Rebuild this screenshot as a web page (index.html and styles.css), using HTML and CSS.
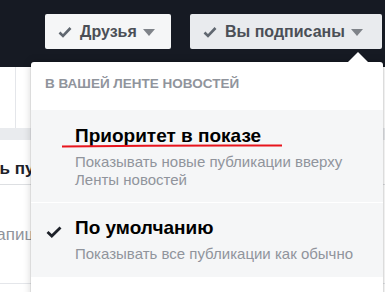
FILE: index.html
```html
<!DOCTYPE html>
<html>
<head>
<meta charset="utf-8">
<link rel="stylesheet" href="styles.css">
</head>
<body>
<div class="topbar">
  <button class="btn btn-friends">
    <svg class="chk" viewBox="0 0 14 12" width="14" height="12"><path d="M1.5 6.5 L5 10 L12.5 2" fill="none" stroke="#606770" stroke-width="2.6"/></svg>
    <span>Друзья</span>
    <span class="tri"></span>
  </button>
  <button class="btn btn-follow">
    <svg class="chk" viewBox="0 0 14 12" width="14" height="12"><path d="M1.5 6.5 L5 10 L12.5 2" fill="none" stroke="#606770" stroke-width="2.6"/></svg>
    <span>Вы подписаны</span>
    <span class="tri"></span>
  </button>
</div>
<div class="page">
  <div class="col-top"></div>
  <div class="strip"></div>
  <div class="tabs"><span class="tab-label">Создать публикацию</span></div>
  <div class="composer"><span class="composer-text">Напишите что-нибудь...</span></div>
</div>

<div class="menu">
  <div class="menu-head">В ВАШЕЙ ЛЕНТЕ НОВОСТЕЙ</div>
  <div class="item item-priority">
    <div class="title">Приоритет в показе
      <svg class="mark" viewBox="0 0 222 4" width="222" height="4"><path d="M1 2.6 Q110 1.2 221 1.6" fill="none" stroke="#e8141c" stroke-width="2"/></svg>
    </div>
    <div class="desc">Показывать новые публикации вверху Ленты новостей</div>
  </div>
  <div class="item item-default">
    <svg class="tick" viewBox="0 0 16 12" width="16" height="12"><path d="M1.5 6 L5.8 10 L14.5 1.5" fill="none" stroke="#1d2129" stroke-width="2.8"/></svg>
    <div class="title">По умолчанию</div>
    <div class="desc">Показывать все публикации как обычно</div>
  </div>
</div>
</body>
</html>
```
FILE: styles.css
```css
html, body {
  margin: 0;
  padding: 0;
  width: 385px;
  height: 292px;
  overflow: hidden;
  background: #fff;
  font-family: "Liberation Sans", Arial, sans-serif;
  position: relative;
}

.topbar {
  height: 67px;
  background: #161a23;
  display: flex;
  align-items: flex-start;
  padding: 14px 0 0 45px;
  box-sizing: border-box;
  gap: 19px;
}

.btn {
  height: 35px;
  border: none;
  border-radius: 2px;
  display: flex;
  align-items: center;
  font-family: inherit;
  font-weight: bold;
  font-size: 16px;
  color: #4b4f56;
  padding: 0 0 0 13px;
  box-sizing: border-box;
}
.btn-friends {
  width: 126px;
  background: #f5f6f7;
}
.btn-follow {
  width: 192px;
  background: #e9ebee;
}
.chk { margin-right: 8px; }
.tri {
  width: 0;
  height: 0;
  border-left: 6.5px solid transparent;
  border-right: 6.5px solid transparent;
  border-top: 7px solid #7f8389;
  margin-left: 6px;
  margin-top: 2px;
}

.page {
  position: relative;
}
.col-top {
  height: 61px;
  margin-left: 15px;
  border-left: 1px solid #e4e6ea;
}
.strip {
  height: 12px;
  background: #e9ebee;
}
.tabs {
  height: 45px;
  border-bottom: 1px solid #dddfe2;
  position: relative;
  box-sizing: border-box;
  padding-top: 19px;
  overflow: hidden;
  white-space: nowrap;
}
.tab-label {
  display: inline-block;
  font-weight: bold;
  font-size: 17px;
  color: #1d2129;
  margin-left: -60px;
}
.tabs::after {
  content: "";
  position: absolute;
  left: 14px;
  bottom: -1px;
  width: 12px;
  height: 6px;
  background: #fff;
  clip-path: polygon(0 100%, 50% 0, 100% 100%);
}
.composer {
  height: 99px;
  border-bottom: 1px solid #e4e6ea;
  padding-top: 40px;
  box-sizing: border-box;
  white-space: nowrap;
  overflow: hidden;
}
.composer-text {
  display: inline-block;
  font-size: 17px;
  color: #90949c;
  margin-left: -16px;
}

.menu {
  position: absolute;
  left: 31px;
  top: 62px;
  width: 352px;
  height: 240px;
  background: #fff;
  border-radius: 3px;
  box-shadow: 0 0 8px rgba(0,0,0,0.18), 0 0 0 1px rgba(0,0,0,0.06);
}
.menu::before {
  content: "";
  position: absolute;
  top: -10px;
  left: 317px;
  width: 20px;
  height: 10px;
  background: #fff;
  clip-path: polygon(0 100%, 50% 0, 100% 100%);
}
.menu-head {
  height: 48px;
  box-sizing: border-box;
  padding: 14px 0 0 14px;
  font-size: 13.5px;
  font-weight: bold;
  color: #90949c;
}
.item {
  position: relative;
  background: #f5f6f7;
  padding: 14px 10px 0 44px;
  border-bottom: 1px solid #fff;
  box-sizing: border-box;
}
.item-priority { height: 93px; }
.title {
  position: relative;
  font-size: 19px;
  font-weight: bold;
  color: #000;
  line-height: 24px;
}
.mark {
  position: absolute;
  left: -14px;
  top: 20px;
}
.desc {
  font-size: 15px;
  color: #90949c;
  line-height: 18px;
  margin-top: 5px;
}
.item-default {
  height: 74px;
  padding-top: 13px;
  border-bottom: none;
}
.tick {
  position: absolute;
  left: 15px;
  top: 23px;
}
```
